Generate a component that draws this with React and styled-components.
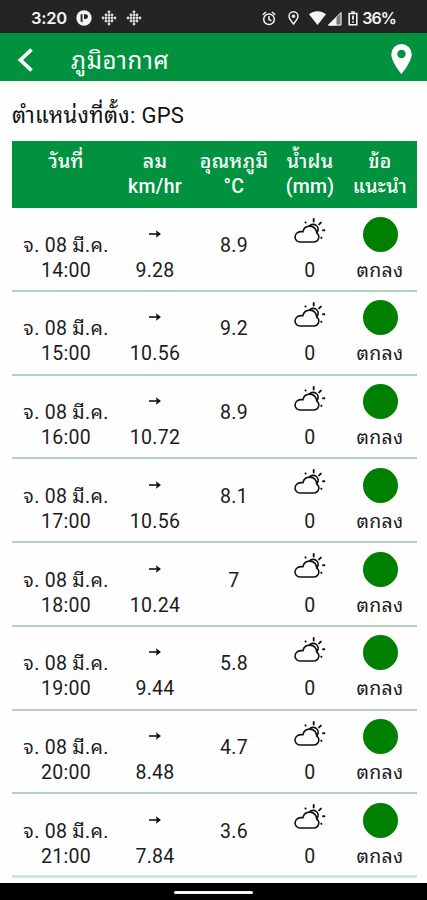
import styled, { createGlobalStyle } from "styled-components";

const GlobalStyle = createGlobalStyle`
  * {
    box-sizing: border-box;
  }

  body {
    margin: 0;
    background: #fefefe;
    font-family: Roboto, "Noto Sans Thai Looped", "Droid Sans Thai", Loma, "Noto Sans", sans-serif;
  }
`;

const Screen = styled.div`
  display: flex;
  flex-direction: column;
  width: 427px;
  height: 900px;
  overflow: hidden;
  background: #fefefe;
  color: #1c1c1c;
`;

const StatusBar = styled.header`
  display: flex;
  flex: none;
  align-items: center;
  justify-content: space-between;
  height: 33px;
  padding: 3px 31px 0 31px;
  background: #242424;
  color: #f4f4f4;
`;

const StatusGroup = styled.div`
  display: flex;
  align-items: center;
  gap: ${({ $gap }) => $gap}px;
`;

const StatusText = styled.span`
  margin-left: ${({ $left }) => $left || 0}px;
  font-family: Inter, Roboto, sans-serif;
  font-size: ${({ $size }) => $size}px;
  font-weight: 600;
  line-height: 20px;
  letter-spacing: ${({ $spacing }) => $spacing || 0}px;
`;

const StatusIcon = styled.svg`
  display: block;
  flex: none;
  margin-left: ${({ $left }) => $left || 0}px;
`;

const AppBar = styled.nav`
  display: flex;
  flex: none;
  align-items: center;
  height: 48px;
  padding: 0 15px 0 17px;
  background: #00923f;
  color: #fff;
`;

const IconButton = styled.button`
  display: flex;
  padding: ${({ $top }) => $top || 0}px 0 0;
  border: 0;
  background: none;
  color: inherit;
`;

const Title = styled.h1`
  flex: 1;
  margin: 8px 0 0 36px;
  font-size: 24px;
  font-weight: 400;
  line-height: 30px;
  letter-spacing: 0.6px;
`;

const Content = styled.main`
  flex: 1;
  min-height: 0;
  overflow: hidden;
  padding: 0 10px 0 12px;
`;

const Location = styled.p`
  height: 60px;
  margin: 0;
  padding-top: 20px;
  font-size: 22px;
  line-height: 30px;
  color: #111;
  letter-spacing: 0.3px;
  white-space: nowrap;
`;

const GridRow = styled.div`
  display: grid;
  grid-template-columns: 108px 70px 88px 64px 76px;
`;

const TableHead = styled(GridRow)`
  height: 67px;
  padding-top: 8px;
  background: #00923f;
  color: #fff;
`;

const HeadCell = styled.div`
  display: flex;
  flex-direction: column;
  align-items: center;
  font-size: 19.5px;
  font-weight: 500;
  line-height: 25px;
  letter-spacing: 0.3px;
  white-space: nowrap;
`;

const TableRow = styled(GridRow)`
  height: 83.75px;
  padding-top: 7.6px;
  border-bottom: 2px solid #b4d2b9;

  &:last-child {
    border-bottom: 3px solid #d6e3d8;
  }
`;

const Cell = styled.div`
  display: flex;
  flex-direction: column;
  align-items: center;
  padding-top: ${({ $top }) => $top || 0}px;
  font-size: 19.5px;
  line-height: 25px;
  letter-spacing: 0.3px;
  white-space: nowrap;
`;

const IconSlot = styled.span`
  display: flex;
  align-items: center;
  justify-content: center;
  height: 42px;
  padding-bottom: ${({ $lift }) => $lift}px;
`;

const Dot = styled.span`
  width: 35px;
  height: 35px;
  margin: 1px 0 6px;
  border-radius: 50%;
  background: #008000;
`;

const BottomBar = styled.footer`
  display: flex;
  flex: none;
  align-items: flex-start;
  justify-content: center;
  height: 17px;
  padding-top: 8px;
  background: #000;
`;

const HomeHandle = styled.span`
  width: 79px;
  height: 3px;
  border-radius: 2px;
  background: #f5f5f5;
`;

const headings = [
  ["วันที่"],
  ["ลม", "km/hr"],
  ["อุณหภูมิ", "°C"],
  ["น้ำฝน", "(mm)"],
  ["ข้อ", "แนะนำ"],
];

const forecast = [
  { time: "14:00", wind: "9.28", temperature: "8.9" },
  { time: "15:00", wind: "10.56", temperature: "9.2" },
  { time: "16:00", wind: "10.72", temperature: "8.9" },
  { time: "17:00", wind: "10.56", temperature: "8.1" },
  { time: "18:00", wind: "10.24", temperature: "7" },
  { time: "19:00", wind: "9.44", temperature: "5.8" },
  { time: "20:00", wind: "8.48", temperature: "4.7" },
  { time: "21:00", wind: "7.84", temperature: "3.6" },
];

function AppBadge() {
  return (
    <StatusIcon width="16" height="16" viewBox="0 0 16 16">
      <circle cx="8" cy="8" r="7.7" fill="currentColor" />
      <path
        d="M4.6 4.2h1.9v8.3a5 5 0 0 1-1.9-1.2ZM8 4.2h1.6a2.4 2.4 0 0 1 0 4.8H8Z"
        fill="#242424"
      />
    </StatusIcon>
  );
}

function DotsIcon() {
  const columns = [1, 3, 5, 3, 1];
  return (
    <StatusIcon width="16" height="16" viewBox="0 0 16 16" fill="#d8d8d8">
      {columns.map((count, column) =>
        Array.from({ length: count }, (_, index) => (
          <circle
            key={`${column}-${index}`}
            cx={2 + column * 3}
            cy={8 + (index - (count - 1) / 2) * 3}
            r="1.4"
          />
        ))
      )}
    </StatusIcon>
  );
}

function AlarmIcon() {
  return (
    <StatusIcon
      width="14"
      height="15"
      viewBox="0 0 14 15"
      fill="none"
      stroke="currentColor"
      strokeWidth="1.5"
    >
      <circle cx="7" cy="8.2" r="5.3" />
      <path d="M.8 3.8 4 1M13.2 3.8 10 1M7 5v3.5l2.4 1.4" />
    </StatusIcon>
  );
}

function SmallPinIcon() {
  return (
    <StatusIcon
      $left={12}
      width="11"
      height="14"
      viewBox="0 0 11 14"
      fill="none"
      stroke="currentColor"
      strokeWidth="1.4"
    >
      <path d="M5.5 13C3.2 10 1 7.6 1 5.2a4.5 4.5 0 0 1 9 0C10 7.6 7.8 10 5.5 13Z" />
      <circle cx="5.5" cy="5.2" r="1.7" fill="currentColor" stroke="none" />
    </StatusIcon>
  );
}

function WifiIcon() {
  return (
    <StatusIcon $left={10} width="17" height="14" viewBox="0 0 17 14">
      <path d="M8.5 14 0 3.2C5-.9 12-.9 17 3.2Z" fill="currentColor" />
    </StatusIcon>
  );
}

function SignalIcon() {
  return (
    <StatusIcon $left={1} width="15" height="15" viewBox="0 0 15 15">
      <path d="M1 14.5 14.5 1v13.5Z" fill="#777" />
      <path d="M1 14.5 9.5 6v8.5Z" fill="currentColor" />
      <path
        d="M1.5 14 14 1.5V14Z"
        fill="none"
        stroke="currentColor"
        strokeWidth="1"
      />
    </StatusIcon>
  );
}

function BatteryIcon() {
  return (
    <StatusIcon
      $left={6}
      width="10"
      height="15"
      viewBox="0 0 10 15"
      fill="none"
      stroke="currentColor"
    >
      <path d="M1.2 2.5h7.6v11.3H1.2Z" strokeWidth="1.6" />
      <path d="M3.2 1h3.6" strokeWidth="1.6" />
      <path d="M5 4.5v4.2M5 10.2v1.6" strokeWidth="1.8" />
    </StatusIcon>
  );
}

function BackIcon() {
  return (
    <svg width="18" height="26" viewBox="0 0 18 26" fill="none">
      <path d="M14.5 2.5 3.5 13l11 10.5" stroke="currentColor" strokeWidth="3.8" />
    </svg>
  );
}

function PinIcon() {
  return (
    <svg width="21" height="30" viewBox="0 0 21 30">
      <path
        d="M10.5 0A10.2 10.2 0 0 0 .3 10.2C.3 17.8 10.5 30 10.5 30s10.2-12.2 10.2-19.8A10.2 10.2 0 0 0 10.5 0Zm0 5.8a4.2 4.2 0 1 1 0 8.4 4.2 4.2 0 0 1 0-8.4Z"
        fill="currentColor"
        fillRule="evenodd"
      />
    </svg>
  );
}

function ArrowIcon() {
  return (
    <svg width="12" height="8" viewBox="0 0 12 8">
      <path d="M0 4h9" stroke="#222" strokeWidth="1.7" />
      <path d="M7 .3 12 4 7 7.7l.7-3.7Z" fill="#111" />
    </svg>
  );
}

function PartlyCloudyIcon() {
  return (
    <svg
      width="32"
      height="26"
      viewBox="0 0 32 26"
      fill="none"
      stroke="#111"
      strokeWidth="1.6"
      strokeLinecap="round"
    >
      <path d="M6 24h13.8a4.9 4.9 0 0 0 2.9-8.9c0-4.1-3-7-6.8-7-3.5 0-6.3 2.3-7 5.6-4.7-.6-7.9 1.8-7.9 5.3A5 5 0 0 0 6 24Z" />
      <path d="M15.4 8.1a4.9 4.9 0 1 1 7.6 6.4" />
      <path
        d="M19.7 1v2.6M26.9 4.6l-1.8 1.8M29 12.2h1.4M27.2 19.6l.3.3M11.4 4.3l.3.3"
        strokeWidth="1.9"
      />
    </svg>
  );
}

export default function App() {
  return (
    <>
      <GlobalStyle />
      <Screen>
        <StatusBar>
          <StatusGroup $gap={9}>
            <StatusText $size={16.5} $spacing={-0.3}>
              3:20
            </StatusText>
            <AppBadge />
            <DotsIcon />
            <DotsIcon />
          </StatusGroup>
          <StatusGroup $gap={0}>
            <AlarmIcon />
            <SmallPinIcon />
            <WifiIcon />
            <SignalIcon />
            <BatteryIcon />
            <StatusText $size={16} $left={4} $spacing={-0.9}>
              36%
            </StatusText>
          </StatusGroup>
        </StatusBar>
        <AppBar>
          <IconButton $top={5} aria-label="ย้อนกลับ">
            <BackIcon />
          </IconButton>
          <Title>ภูมิอากาศ</Title>
          <IconButton $top={4} aria-label="ตำแหน่ง">
            <PinIcon />
          </IconButton>
        </AppBar>
        <Content>
          <Location>ตำแหน่งที่ตั้ง: GPS</Location>
          <TableHead>
            {headings.map((lines) => (
              <HeadCell key={lines[0]}>
                {lines.map((line) => (
                  <span key={line}>{line}</span>
                ))}
              </HeadCell>
            ))}
          </TableHead>
          {forecast.map(({ time, wind, temperature }) => (
            <TableRow key={time}>
              <Cell $top={17}>
                <span>จ. 08 มี.ค.</span>
                <span>{time}</span>
              </Cell>
              <Cell>
                <IconSlot $lift={6}>
                  <ArrowIcon />
                </IconSlot>
                <span>{wind}</span>
              </Cell>
              <Cell $top={17}>{temperature}</Cell>
              <Cell>
                <IconSlot $lift={11}>
                  <PartlyCloudyIcon />
                </IconSlot>
                <span>0</span>
              </Cell>
              <Cell>
                <Dot />
                <span>ตกลง</span>
              </Cell>
            </TableRow>
          ))}
        </Content>
        <BottomBar>
          <HomeHandle />
        </BottomBar>
      </Screen>
    </>
  );
}
